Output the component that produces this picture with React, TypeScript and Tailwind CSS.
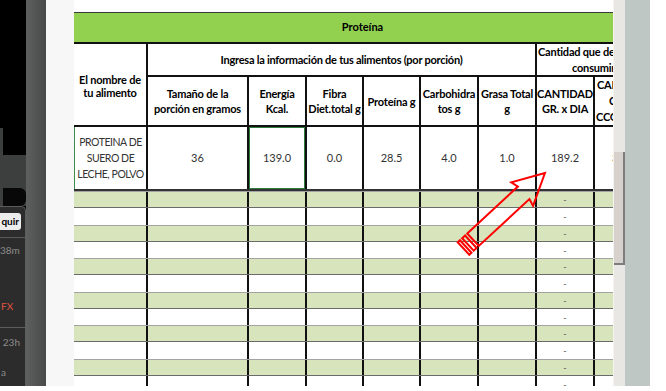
import React from "react";

const cols = [72, 101, 58, 57, 57, 58, 58, 58, 20];
const rowH = [17, 17, 17, 16, 17, 17, 17, 16, 17, 17, 17, 16];

const font = "font-['Lato','Liberation_Sans',sans-serif]";

const HeadCell = ({ w, first, children }: { w: number; first?: boolean; children: React.ReactNode }) => (
  <div
    style={{ width: w }}
    className={`h-full shrink-0 flex items-center justify-center text-center font-bold text-[11px] leading-[15px] tracking-[-0.2px] text-black overflow-hidden ${first ? "" : "border-l-2 border-[#111]"}`}
  >
    {children}
  </div>
);

const LeftApp = () => (
  <div className="w-[26px] shrink-0 flex flex-col bg-black overflow-hidden">
    <div className="h-[128px] bg-black" />
    <div className="h-[78px] bg-[#3d3f3f] flex flex-col pl-[3px]">
      <div className="h-[27px] bg-black" />
      <div className="h-[33px]" />
      <div className="h-[18px] bg-[#080808] rounded-r-[6px]" />
    </div>
    <div className={`flex-1 bg-[#2c2c2c] border-r border-t border-[#5c5c5c] rounded-tr-[5px] flex flex-col ${font}`}>
      <div className="mt-[6px] h-[17px] w-[21px] bg-[#ececec] rounded-r-[3px] text-[10px] font-bold leading-[17px] text-black text-right pr-[2px]">
        quir
      </div>
      <div className="mt-[7px] h-px bg-[#5c5c5c]" />
      <div className="mt-[6px] text-[10px] leading-[12px] text-[#8c8c8c] text-right pr-[6px]">38m</div>
      <div className="mt-[44px] text-[10px] leading-[12px] text-[#e0533f] pl-px">FX</div>
      <div className="mt-[15px] h-px bg-[#5c5c5c]" />
      <div className="mt-[8px] text-[10px] leading-[12px] text-[#8c8c8c] text-right pr-[5px]">23h</div>
      <div className="mt-[18px] text-[10px] leading-[12px] text-[#8c8c8c] pl-px">a</div>
    </div>
  </div>
);

const Arrow = () => (
  <svg className="absolute left-0 top-0 pointer-events-none" width="666" height="391">
    <g transform="translate(463.5 248.5) rotate(-42.8)" fill="none" stroke="#ff0000" strokeWidth="2" strokeLinejoin="miter">
      <rect x="0" y="-8.5" width="3" height="17" />
      <rect x="6" y="-8.5" width="4" height="17" />
      <path d="M13 -8.5 L82 -8.5 L80 -16 L111 0 L80 16 L82 8.5 L13 8.5 Z" />
    </g>
  </svg>
);

export default function App() {
  return (
    <div className={`relative w-[666px] h-[391px] bg-white overflow-hidden ${font}`}>
      <div className="flex w-[650px] h-[386px]">
        <LeftApp />
        <div className="w-[20px] shrink-0 bg-gradient-to-r from-[#5d605f] to-[#474a49]" />
        <div className="w-[28px] shrink-0 bg-[#f7f7f7]" />

        {/* sheet */}
        <div className="w-[539px] shrink-0 flex flex-col bg-white overflow-hidden">
          <div className="h-[12px] shrink-0" />
          <div className="h-[32px] shrink-0 bg-[#92d050] border-t border-[#3a3a3a] border-b-2 border-b-[#111] flex items-center justify-center pl-[38px] text-[11px] font-bold text-black">
            Proteína
          </div>

          {/* header block */}
          <div className="h-[83px] shrink-0 flex border-b-2 border-[#111]">
            <div className="w-[72px] shrink-0 flex items-center justify-center text-center text-[11px] leading-[13px] tracking-[-0.2px] font-bold text-black pt-[2px]">
              El nombre de
              <br />
              tu alimento
            </div>
            <div className="flex-1 flex flex-col">
              <div className="h-[33px] shrink-0 flex border-b-2 border-[#111]">
                <div className="w-[389px] shrink-0 border-l-2 border-[#111] flex items-center justify-center text-[11px] tracking-[-0.25px] font-bold text-black pt-[2px]">
                  Ingresa la información de tus alimentos (por porción)
                </div>
                <div className="flex-1 border-l-2 border-[#111] overflow-hidden flex flex-col justify-center text-[11px] leading-[16px] tracking-[-0.2px] font-bold text-black whitespace-nowrap">
                  <div className="pl-[1px]">Cantidad que debes</div>
                  <div className="pl-[35px]">consumir</div>
                </div>
              </div>
              <div className="flex-1 flex">
                <HeadCell w={101}>Tamaño de la<br />porción en gramos</HeadCell>
                <HeadCell w={58}>Energía<br />Kcal.</HeadCell>
                <HeadCell w={57}>Fibra<br />Diet.total g</HeadCell>
                <HeadCell w={57}>Proteína g</HeadCell>
                <HeadCell w={58}>Carbohidra<br />tos g</HeadCell>
                <HeadCell w={58}>Grasa Total<br />g</HeadCell>
                <HeadCell w={58}>CANTIDAD<br />GR. x DIA</HeadCell>
                <div className="w-[20px] shrink-0 h-full border-l-2 border-[#111] overflow-hidden flex flex-col justify-center text-[11px] leading-[16px] tracking-[-0.2px] font-bold text-black whitespace-nowrap">
                  <div className="pl-[2px]">CANTIDAD</div>
                  <div className="pl-[14px]">CON</div>
                  <div className="pl-[1px]">CCOMIDA</div>
                </div>
              </div>
            </div>
          </div>

          {/* data row */}
          <div className="h-[64px] shrink-0 flex border-b-2 border-[#333] text-[11px] text-[#333]">
            <div className="w-[72px] shrink-0 border-l border-[#3f8a4f] flex items-center justify-center text-center leading-[16px] text-[10.5px] tracking-[-0.45px] whitespace-nowrap">
              PROTEINA DE
              <br />
              SUERO DE
              <br />
              LECHE, POLVO
            </div>
            <div className="w-[101px] shrink-0 border-l-2 border-[#111] flex items-center justify-center">36</div>
            <div className="w-[58px] shrink-0 border-l-2 border-[#111] flex">
              <div className="flex-1 border border-[#2e7d3e] flex items-center justify-center">139.0</div>
            </div>
            <div className="w-[57px] shrink-0 border-l-2 border-[#111] flex items-center justify-center">0.0</div>
            <div className="w-[57px] shrink-0 border-l-2 border-[#111] flex items-center justify-center">28.5</div>
            <div className="w-[58px] shrink-0 border-l-2 border-[#111] flex items-center justify-center">4.0</div>
            <div className="w-[58px] shrink-0 border-l-2 border-[#111] flex items-center justify-center">1.0</div>
            <div className="w-[58px] shrink-0 border-l-2 border-[#111] flex items-center justify-center">189.2</div>
            <div className="w-[20px] shrink-0 border-l-2 border-[#111] flex items-center overflow-hidden pl-[17px]">35</div>
          </div>

          {/* empty rows */}
          {rowH.map((h, r) => (
            <div
              key={r}
              style={{ height: h }}
              className={`shrink-0 flex ${r % 2 === 0 ? "bg-[#d8e4bc] border-t border-[#a3a3a3] border-b border-b-[#6b6b6b]" : "bg-white"}`}
            >
              {cols.map((w, c) => (
                <div
                  key={c}
                  style={{ width: w }}
                  className={`shrink-0 h-full flex items-center justify-center text-[9px] leading-none text-[#555] ${c === 0 ? "" : "border-l-2 border-[#111]"}`}
                >
                  {c === 7 ? "-" : ""}
                </div>
              ))}
            </div>
          ))}
        </div>

        {/* scrollbar */}
        <div className="w-[12px] shrink-0 bg-[#e9e7e3] border-l border-[#f4f3f0] flex flex-col">
          <div className="h-[152px] shrink-0" />
          <div className="h-[113px] shrink-0 bg-[#d6d1cc] border-r-2 border-b-2 border-[#7d7d7d]" />
        </div>
        <div className="w-[25px] shrink-0 bg-[#bec7c3]" />
      </div>
      <Arrow />
    </div>
  );
}
